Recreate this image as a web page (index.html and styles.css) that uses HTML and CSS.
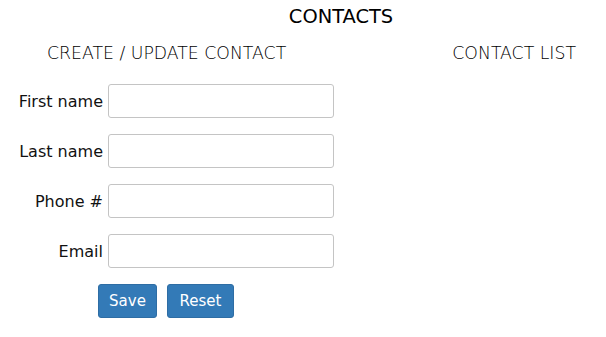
FILE: index.html
```html
<!DOCTYPE html>
<html>
<head>
<meta charset="utf-8">
<link rel="stylesheet" href="styles.css">
</head>
<body>
<h1 class="title">CONTACTS</h1>
<div class="sections">
  <h2 class="section-title">CREATE / UPDATE CONTACT</h2>
  <h2 class="section-title">CONTACT LIST</h2>
</div>
<form class="contact-form">
  <label class="field-label" for="first">First name</label>
  <input class="field-input" id="first" type="text">
  <label class="field-label" for="last">Last name</label>
  <input class="field-input" id="last" type="text">
  <label class="field-label" for="phone">Phone #</label>
  <input class="field-input" id="phone" type="text">
  <label class="field-label" for="email">Email</label>
  <input class="field-input" id="email" type="text">
  <div class="actions">
    <button class="btn" type="button">Save</button>
    <button class="btn btn-wide" type="button">Reset</button>
  </div>
</form>
</body>
</html>
```
FILE: styles.css
```css
html, body {
  margin: 0;
  padding: 0;
  background: #ffffff;
}
body {
  font-family: "DejaVu Sans", sans-serif;
  color: #111111;
  width: 606px;
}
.title {
  margin: 6px 0 0 76px;
  font-size: 19.4px;
  font-weight: 400;
  line-height: 22px;
  text-align: center;
  color: #000000;
}
.sections {
  display: flex;
  justify-content: space-between;
  padding: 0 30px 0 47px;
  margin-top: 15px;
}
.section-title {
  margin: 0;
  font-size: 17.3px;
  font-weight: 300;
  line-height: 20px;
  color: #000000;
}
.contact-form {
  display: grid;
  grid-template-columns: 103px 226px;
  column-gap: 5px;
  row-gap: 16px;
  margin-top: 21px;
  align-items: center;
}
.field-label {
  font-size: 16px;
  text-align: right;
  color: #111111;
}
.field-input {
  box-sizing: border-box;
  width: 226px;
  height: 34px;
  border: 1px solid #c4c4c4;
  border-radius: 3px;
  margin: 0;
  padding: 6px 10px;
  font-size: 14px;
}
.actions {
  grid-column: 1 / span 2;
  display: flex;
  gap: 10px;
  padding-left: 98px;
}
.btn {
  box-sizing: border-box;
  height: 34px;
  width: 59px;
  padding: 0;
  border: 1px solid #2e6da4;
  border-radius: 3px;
  background: #337ab7;
  color: #ffffff;
  font-family: "DejaVu Sans", sans-serif;
  font-size: 15px;
  text-align: center;
}
.btn-wide {
  width: 67px;
}
```
